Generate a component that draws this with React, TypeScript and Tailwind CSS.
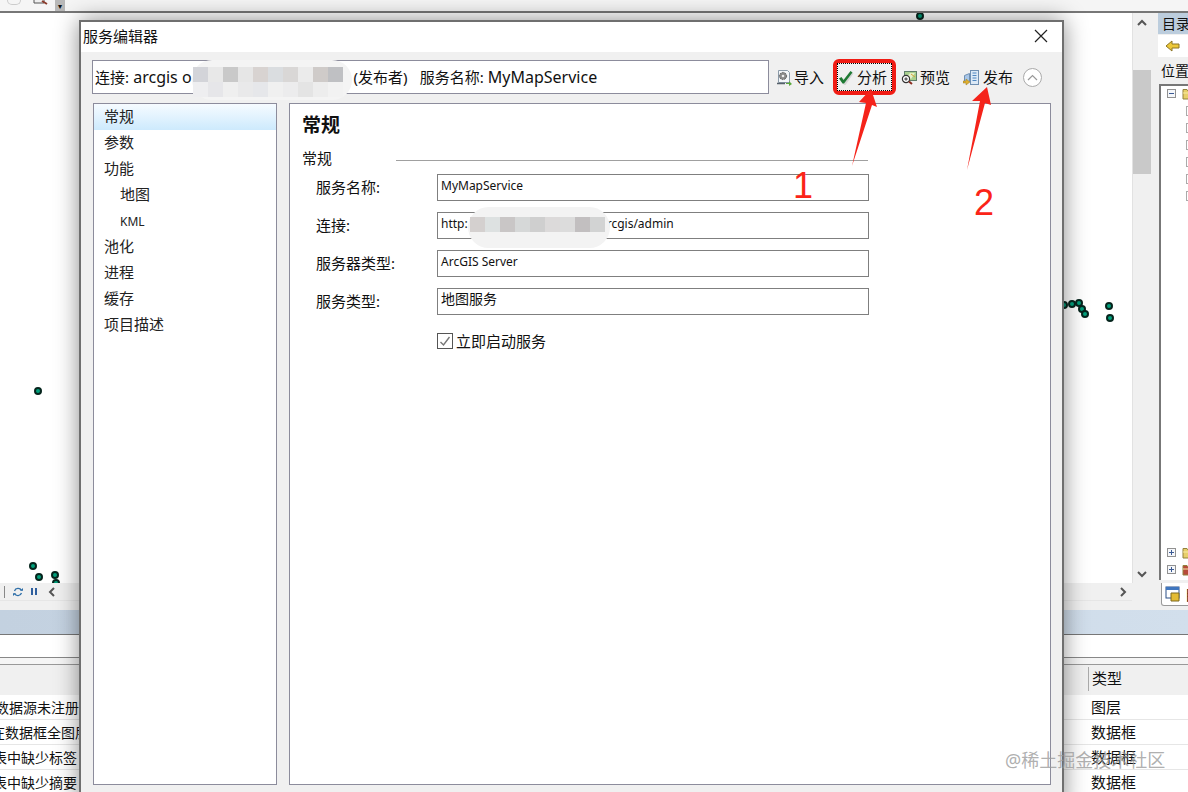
import React from 'react';

const dots = [
  'left-[916px] top-[-1px]', 'left-[34px] top-[374px]', 'left-[29px] top-[549px]', 'left-[35px] top-[560px]',
  'left-[51px] top-[558px]', 'left-[52px] top-[566px]', 'left-[1060px] top-[288px]', 'left-[1068px] top-[287px]',
  'left-[1075px] top-[286px]', 'left-[1078px] top-[292px]', 'left-[1081px] top-[297px]', 'left-[1105px] top-[289px]',
  'left-[1106px] top-[301px]',
];

const navItems = [
  { label: '常规', cls: 'pl-[10px] pb-[2px] text-[15px] bg-gradient-to-b from-[#f6fbff] to-[#cdeafd]' },
  { label: '参数', cls: 'pl-[10px] pb-[2px] text-[15px]' },
  { label: '功能', cls: 'pl-[10px] pb-[2px] text-[15px]' },
  { label: '地图', cls: 'pl-[26px] pb-[2px] text-[15px]' },
  { label: 'KML', cls: 'pl-[26px] pt-px text-xs' },
  { label: '池化', cls: 'pl-[10px] pb-[2px] text-[15px]' },
  { label: '进程', cls: 'pl-[10px] pb-[2px] text-[15px]' },
  { label: '缓存', cls: 'pl-[10px] pb-[2px] text-[15px]' },
  { label: '项目描述', cls: 'pl-[10px] pb-[2px] text-[15px]' },
];

const formRows = [
  { label: '服务名称:', value: <span className="text-[12px]">MyMapService</span> },
  { label: '连接:', value: <span className="text-[12px]">http:<span className="inline-block w-[139px]" />rcgis/admin</span> },
  { label: '服务器类型:', value: <span className="text-[12px]">ArcGIS Server</span> },
  { label: '服务类型:', value: <span className="text-[14px]">地图服务</span> },
];

const bottomRows = [
  { left: '数据源未注册', type: '图层', cls: '-ml-[5px]' },
  { left: '在数据框全图层', type: '数据框', cls: '-ml-[9px]' },
  { left: '表中缺少标签', type: '数据框', cls: '-ml-[7px]' },
  { left: '表中缺少摘要', type: '数据框', cls: '-ml-[7px]' },
];

const mosaicOne = [
  'bg-[#d3d4d9]', 'bg-[#e8e8e8]', 'bg-[#c9c9c9]', 'bg-[#e6e6e6]', 'bg-[#d8d3d1]', 'bg-[#dadde0]', 'bg-[#d9d7d6]', 'bg-[#ebebeb]', 'bg-[#cfcbc9]', 'bg-[#bfc0c3]',
  'bg-[#eeeef0]', 'bg-[#e6e6e9]', 'bg-[#efefef]', 'bg-[#e9e9ea]', 'bg-[#e6e7ea]', 'bg-[#f0f0f0]', 'bg-[#ececed]', 'bg-[#e4e4e4]', 'bg-[#ededed]', 'bg-[#f2f2f2]',
];

const mosaicTwo = ['bg-[#d4d0cf]', 'bg-[#dde1e1]', 'bg-[#c9c6c6]', 'bg-[#d6d8d8]', 'bg-[#cfcfcf]', 'bg-[#dcdada]', 'bg-[#dcdcdc]', 'bg-[#c2bfc0]', 'bg-[#d2d3d3]'];

function ImportIcon() {
  return (
    <svg width="16" height="17" viewBox="0 0 16 17">
      <path d="M2.5 1.5h9l2 2v10h-11z" fill="#f4f7fa" stroke="#8b9aa8" />
      <circle cx="7" cy="7" r="3.6" fill="#8a8a8a" stroke="#5a5a5a" strokeDasharray="1.6 1" />
      <circle cx="7" cy="7" r="1.3" fill="#eee" />
      <path d="M1 14.5h8" stroke="#56606b" strokeWidth="1.5" />
      <path d="M10 14h3v-2l3 3-3 2v-2h-3z" fill="#58a83a" />
    </svg>
  );
}

function CheckIcon() {
  return (
    <svg width="16" height="15" viewBox="0 0 16 15">
      <path d="M2 9l2.5-1.5 2 3L13.5 2 15 3 7 14.5H5.5z" fill="#d6d6d6" transform="translate(0.5 .5)" />
      <path d="M1 8.5l2.5-1.5 2 3L12.5 1l2 1.5L6 13.5H4.500z" fill="#1f7a34" />
    </svg>
  );
}

function PreviewIcon() {
  return (
    <svg width="17" height="15" viewBox="0 0 17 15">
      <rect x="3.5" y="1.5" width="12" height="9" fill="#a9d08e" stroke="#5f7f6c" />
      <path d="M5 8l4-5h5l-4 6z" fill="#e4efc9" />
      <path d="M10 4l4 3" stroke="#d8a43a" />
      <circle cx="5" cy="9" r="3.6" fill="#fff" stroke="#333" strokeWidth="1.2" />
      <path d="M3.3 9h3.400M5 7.300v3.400" stroke="#333" />
      <path d="M8 11.500l3 2.500" stroke="#8b2d20" strokeWidth="2" />
    </svg>
  );
}

function PublishIcon() {
  return (
    <svg width="17" height="17" viewBox="0 0 17 17">
      <path d="M1.500 6.500l5-2v8h-5z" fill="#a9c7e8" stroke="#6f8fb2" />
      <rect x="7.5" y="1.5" width="8" height="14" fill="#dce9f6" stroke="#6f8fb2" />
      <path d="M9.500 4h4M9.500 6.500h4M9.500 9h4M9.500 11.500h4" stroke="#4f86c0" />
      <path d="M0 12h3V10l4 3-4 3v-2H0z" fill="#e0b030" stroke="#9a7a20" strokeWidth=".5" />
    </svg>
  );
}

function FolderIcon({ accent = false }: { accent?: boolean }) {
  return (
    <svg width="14" height="13" viewBox="0 0 14 13" className="shrink-0">
      <path d="M1 2.500h4l1 1.500h7v8H1z" fill={accent ? '#b84a3a' : '#e8cf6a'} stroke="#93803c" />
      <path d="M1 6h12" stroke="#f7eaa8" />
    </svg>
  );
}

function TreeToggle({ plus = false }: { plus?: boolean }) {
  return (
    <span className="relative flex h-[9px] w-[9px] shrink-0 items-center justify-center border border-[#919191] bg-[#f5f7fa]">
      <span className="h-px w-[5px] bg-[#3b5a94]" />
      {plus && <span className="absolute h-[5px] w-px bg-[#3b5a94]" />}
    </span>
  );
}

export default function App() {
  return (
    <div className="relative h-[792px] w-[1188px] overflow-hidden bg-white font-['Noto_Sans','Noto_Sans_CJK_SC',sans-serif] text-[#111]">
      {/* arcmap behind the dialog */}
      <div className="flex h-full flex-col">
        <div className="flex h-[11px] shrink-0 items-start bg-[#f5f5f5] pl-[7px]">
          <span className="h-[5px] w-[14px] rounded-b-full border-x border-b border-[#ccc]" />
          <svg width="17" height="6" viewBox="0 0 17 6" className="ml-[12px]"><path d="M1 0v3h10V0" fill="#eee" stroke="#555" /><path d="M9 1l5 3" stroke="#8b3a2a" strokeWidth="2" /></svg>
          <span className="ml-[5px] flex h-[11px] w-[10px] items-center justify-center bg-[#b8b8b8] text-[8px] leading-none">▾</span>
        </div>
        <div className="h-[2px] shrink-0 bg-[#777]" />
        <div className="flex h-[570px] shrink-0">
          <div className="relative w-[1133px] shrink-0 overflow-hidden border-r border-[#e2e2e2] bg-white">
            {dots.map((pos) => (
              <span key={pos} className={`absolute h-[8px] w-[8px] rounded-full border-2 border-[#06251d] bg-[#00a07c] ${pos}`} />
            ))}
          </div>
          <div className="flex w-[18px] shrink-0 flex-col items-center bg-[#f0f0f0]">
            <svg width="10" height="7" viewBox="0 0 10 7" className="mt-[6px]"><path d="M1 6l4-4 4 4" fill="none" stroke="#555" strokeWidth="2" /></svg>
            <div className="mt-[44px] h-[104px] w-full bg-[#c9c9c9]" />
            <div className="flex-1" />
            <svg width="10" height="7" viewBox="0 0 10 7" className="mb-[5px]"><path d="M1 1l4 4 4-4" fill="none" stroke="#555" strokeWidth="2" /></svg>
          </div>
          <div className="w-[7px] shrink-0 bg-[#f0f0f0]" />
          <div className="flex min-w-0 flex-1 flex-col overflow-hidden bg-[#f0f0f0]">
            <div className="flex h-[21px] shrink-0 items-center whitespace-nowrap bg-[#bccddd] pl-[4px] text-[14px]">目录</div>
            <div className="mt-[1px] flex h-[22px] shrink-0 items-center bg-white pl-[7px]">
              <svg width="15" height="12" viewBox="0 0 15 12"><path d="M1 6l6-5v3h7v4H7v3z" fill="#ecc83a" stroke="#8c7424" /></svg>
            </div>
            <div className="flex h-[27px] shrink-0 items-center whitespace-nowrap pl-[3px] text-[14px]">位置:</div>
            <div className="ml-px mb-[3px] flex flex-1 flex-col border-l-2 border-t-2 border-[#777] bg-white pl-[6px] pt-px">
              <div className="flex h-[13px] shrink-0 items-center gap-[6px]"><TreeToggle /><FolderIcon /></div>
              <div className="flex flex-col gap-[7px] pt-[6px]">
                {[0, 1, 2, 3, 4, 5].map((i) => (
                  <div key={i} className="ml-[19px] h-[10px] w-[9px] border border-[#aaa] bg-white" />
                ))}
              </div>
              <div className="flex-1" />
              <div className="flex h-[13px] items-center gap-[6px]"><TreeToggle plus /><FolderIcon /></div>
              <div className="mt-[4px] flex h-[13px] items-center gap-[6px]"><TreeToggle plus /><FolderIcon accent /></div>
              <div className="h-[4px]" />
            </div>
          </div>
        </div>
        <div className="flex h-[27px] shrink-0 bg-[#f0f0f0]">
          <div className="flex h-[18px] w-[1132px] shrink-0 items-center border-b border-[#e6e6e6]">
            <span className="ml-[4px] h-[12px] w-px bg-[#888]" />
            <svg width="10" height="10" viewBox="0 0 10 10" className="ml-[8px]"><path d="M8.500 3.500A3.800 3.800 0 0 0 1.500 4M1.500 6.500A3.800 3.800 0 0 0 8.500 6" fill="none" stroke="#2f6fa8" strokeWidth="1.3" /><path d="M7 3.700h3V1zM3 6.300H0V9z" fill="#2f6fa8" /></svg>
            <span className="ml-[8px] flex gap-[2px]"><span className="h-[7px] w-[2px] bg-[#2f5f9e]" /><span className="h-[7px] w-[2px] bg-[#2f5f9e]" /></span>
            <svg width="8" height="10" viewBox="0 0 8 10" className="ml-[11px]"><path d="M6 1L2 5l4 4" fill="none" stroke="#555" strokeWidth="2" /></svg>
            <div className="flex-1" />
            <svg width="8" height="10" viewBox="0 0 8 10" className="mr-[5px]"><path d="M2 1l4 4-4 4" fill="none" stroke="#555" strokeWidth="2" /></svg>
          </div>
          <div className="ml-[29px] flex h-[23px] w-[50px] shrink-0 items-center gap-[4px] rounded-b-[3px] border border-t-0 border-[#999] bg-white pl-[3px] text-[14px]">
            <svg width="16" height="16" viewBox="0 0 16 16" className="shrink-0"><rect x="1" y="1" width="13" height="11" fill="#fff" stroke="#2b4f86" /><rect x="1" y="1" width="13" height="3" fill="#3f76bf" /><path d="M6 7h8v8H6z" fill="#e3bb33" stroke="#7d6920" /></svg>
            <span className="whitespace-nowrap">目录</span>
          </div>
        </div>
        <div className="h-[24px] shrink-0 bg-gradient-to-r from-[#c3d1e0] to-[#d2dfec]" />
        <div className="h-px shrink-0 bg-[#777]" />
        <div className="h-[22px] shrink-0 bg-white" />
        <div className="h-px shrink-0 bg-[#888]" />
        <div className="h-[6px] shrink-0 bg-[#f5f5f5]" />
        <div className="h-px shrink-0 bg-[#999]" />
        <div className="flex h-[30px] shrink-0 items-center bg-[#f0f0f0] pb-[3px] text-[15px]">
          <div className="w-[1088px]" />
          <div className="flex h-[24px] items-center border-l border-[#aaa] pl-[3px]">类型</div>
        </div>
        {bottomRows.map((row) => (
          <div key={row.left} className="flex h-[25px] shrink-0 items-center border-b border-[#e6e6e6] bg-white">
            <div className="w-[1091px] shrink-0 overflow-hidden whitespace-nowrap text-[14px]"><span className={`inline-block ${row.cls}`}>{row.left}</span></div>
            <div className="text-[15px]">{row.type}</div>
          </div>
        ))}
      </div>

      {/* service editor dialog */}
      <div className="absolute left-[79px] top-[20px] flex h-[790px] w-[985px] flex-col border-2 border-b-0 border-[#6f6f6f] bg-[#f0f0f0] shadow-[0_0_22px_rgba(0,0,0,0.45)]">
        <div className="flex h-[30px] shrink-0 items-center justify-between bg-white pb-[2px] pl-[2px] pr-[14px] text-[15px]">
          <span>服务编辑器</span>
          <svg width="14" height="14" viewBox="0 0 14 14"><path d="M1 1l12 12M13 1L1 13" stroke="#222" strokeWidth="1.2" /></svg>
        </div>
        <div className="flex flex-1 flex-col pl-[11px] pt-[8px]">
          <div className="flex h-[34px] shrink-0 items-center">
            <div className="flex h-[34px] w-[677px] items-center whitespace-pre border border-[#8c8c9c] bg-white pl-[2px] text-[16px]">
              <span className="text-[15px]">连接:</span> arcgis o<span className="w-[162px]" /><span className="text-[15px]">(发布者)</span><span className="w-[12px]" /><span className="text-[15px]">服务名称:</span> MyMapService
            </div>
            <div className="ml-[7px] flex items-center gap-[2px] text-[15px]"><ImportIcon /><span>导入</span></div>
            <div className="ml-[14px] flex items-center gap-[3px] text-[15px]"><CheckIcon /><span>分析</span></div>
            <div className="ml-[14px] flex items-center gap-[2px] text-[15px]"><PreviewIcon /><span>预览</span></div>
            <div className="ml-[13px] flex items-center gap-[3px] text-[15px]"><PublishIcon /><span>发布</span></div>
            <div className="ml-[10px] flex h-[19px] w-[19px] items-center justify-center rounded-full border border-[#aaa] bg-white">
              <svg width="11" height="7" viewBox="0 0 11 7"><path d="M1 6l4.500-4.500L10 6" fill="none" stroke="#999" strokeWidth="1.2" /></svg>
            </div>
          </div>
          <div className="mt-[9px] flex h-[682px] shrink-0 gap-[12px] pl-px">
            <div className="w-[184px] border border-[#8c8c9c] bg-white text-[#222]">
              {navItems.map((item) => (
                <div key={item.label} className={`flex h-[26px] items-center ${item.cls}`}>{item.label}</div>
              ))}
            </div>
            <div className="w-[762px] border border-[#8c8c9c] bg-white pl-[12px] pt-[7px]">
              <div className="h-[28px] text-[19px] font-bold leading-[28px]">常规</div>
              <div className="mt-[9px] flex h-[20px] items-center text-[15px]">
                <span className="w-[94px]">常规</span>
                <span className="mt-[4px] h-px w-[472px] bg-[#a0a0a0]" />
              </div>
              <div className="mt-[6px] flex flex-col gap-[11px]">
                {formRows.map((row) => (
                  <div key={row.label} className="flex h-[27px] items-center text-[15px]">
                    <span className="ml-[14px] w-[121px]">{row.label}</span>
                    <div className="h-[27px] w-[432px] whitespace-pre border border-[#7f7f7f] bg-white pl-[3px] leading-[18px]">{row.value}</div>
                  </div>
                ))}
              </div>
              <div className="ml-[135px] mt-[15px] flex items-center gap-[3px] text-[15px]">
                <span className="flex h-[16px] w-[16px] items-center justify-center border border-[#555] bg-white">
                  <svg width="12" height="11" viewBox="0 0 12 11"><path d="M1.500 6l3 3 6-8" fill="none" stroke="#777" strokeWidth="1.4" /></svg>
                </span>
                <span>立即启动服务</span>
              </div>
            </div>
          </div>
        </div>
      </div>

      {/* mosaic over the redacted host names */}
      <div className="absolute left-[192px] top-[60px] h-[40px] w-[160px] rounded-full bg-[#f4f4f4] pl-[1px] pt-[7px]">
        <div className="grid grid-cols-[repeat(10,15px)] grid-rows-[15px_15px]">
          {mosaicOne.map((c, i) => <span key={i} className={c} />)}
        </div>
      </div>
      <div className="absolute left-[468px] top-[207px] h-[41px] w-[142px] rounded-full bg-[#f3f3f3] pl-[2px] pt-[10px]">
        <div className="grid grid-cols-[repeat(9,15px)] grid-rows-[15px]">
          {mosaicTwo.map((c, i) => <span key={i} className={c} />)}
        </div>
      </div>

      {/* red annotations */}
      <div className="absolute left-[833px] top-[59px] h-[36px] w-[63px] rounded-[6px] border-[4px] border-[#f01c14]">
        <div className="h-full w-full border border-dotted border-black" />
      </div>
      <svg className="absolute left-[840px] top-[80px]" width="160" height="100" viewBox="840 80 160 100">
        <path d="M871 89L859 102L866 103L852 166L872 105L877 107Z" fill="#f5231a" />
        <path d="M987 87L972 101L980 101L967 170L985 103L991 105Z" fill="#f5231a" />
      </svg>
      <span className="absolute left-[793px] top-[165px] font-['Liberation_Sans',sans-serif] text-[36px] leading-[42px] text-[#fb2418]">1</span>
      <span className="absolute left-[974px] top-[182px] font-['Liberation_Sans',sans-serif] text-[36px] leading-[42px] text-[#fb2418]">2</span>

      <span className="absolute left-[1005px] top-[748px] whitespace-nowrap text-[18px] leading-[24px] text-[#9a9a9a]/80">@稀土掘金技术社区</span>
    </div>
  );
}
